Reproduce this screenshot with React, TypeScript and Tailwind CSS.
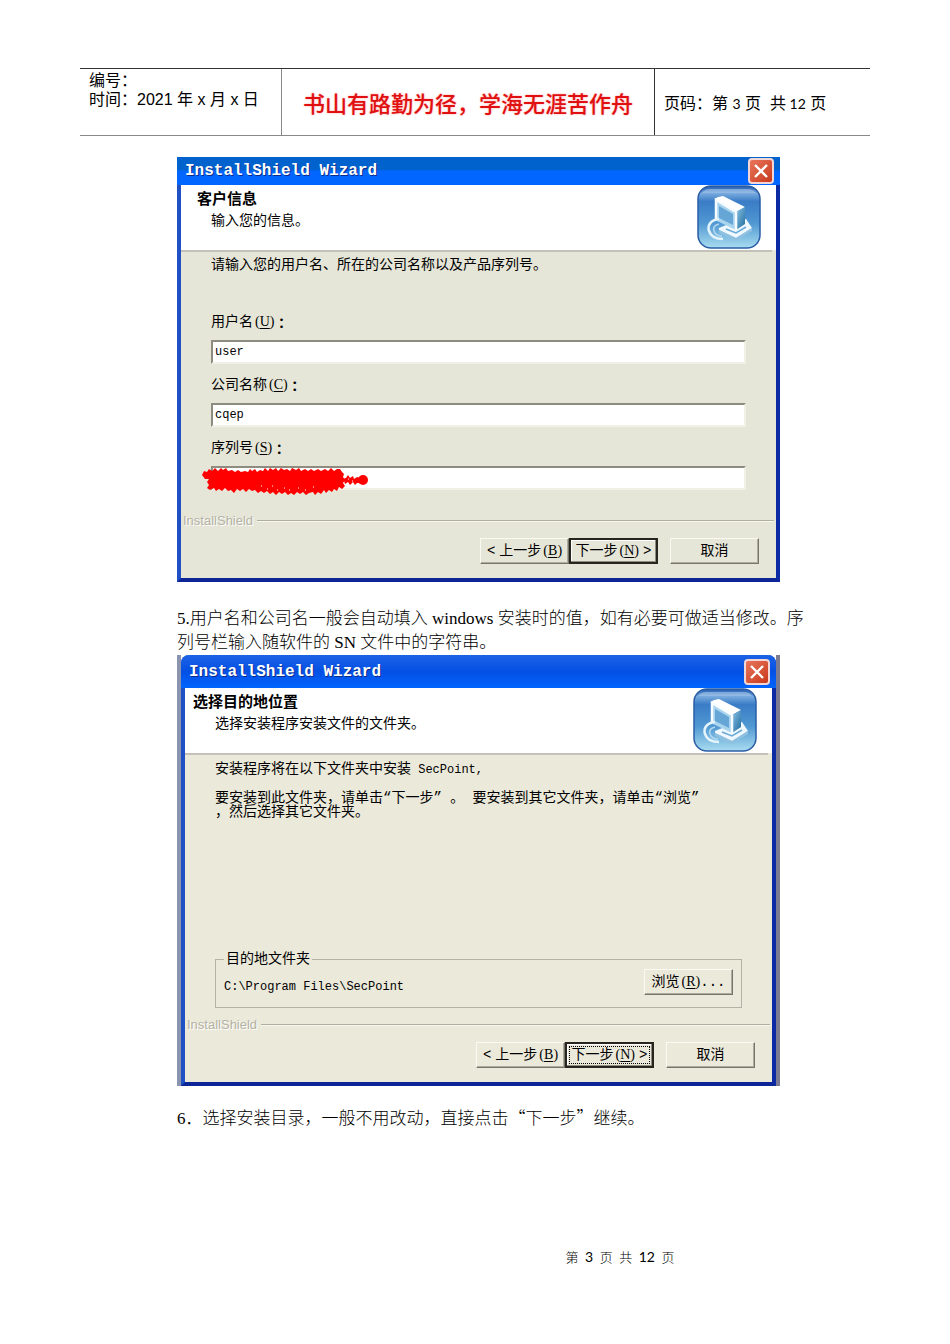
import { useId, type ReactNode } from 'react';
import { clsx } from 'clsx';

interface WizardWindowProps {
  heading: string;
  summary: string;
  variant?: 'flat' | 'glossy';
  children: ReactNode;
}

interface FieldProps {
  label: string;
  hotkey: string;
  value: string;
  redacted?: boolean;
}

interface WizardButtonProps {
  isDefault?: boolean;
  isFocused?: boolean;
  children: ReactNode;
}

// Latin text inside the dialogs is half width next to the Chinese glyphs
function Mono({ children }: { children: ReactNode }) {
  return <span className="text-xs whitespace-pre">{children}</span>;
}

function Hotkey({ letter }: { letter: string }) {
  return (
    <span className="ml-0.5 font-['Liberation_Serif',serif] text-sm">
      (<u className="underline-offset-2">{letter}</u>)
    </span>
  );
}

function InstallIcon() {
  const id = useId();

  return (
    <svg viewBox="0 0 64 64" className="size-16 shrink-0" aria-hidden="true">
      <defs>
        <linearGradient id={`${id}-bg`} x1="0" y1="0" x2="0" y2="1">
          <stop offset="0" stopColor="#1d56ae" />
          <stop offset="0.12" stopColor="#78aade" />
          <stop offset="0.25" stopColor="#3a7cc6" />
          <stop offset="0.6" stopColor="#5098d2" />
          <stop offset="1" stopColor="#a9dcf0" />
        </linearGradient>
        <linearGradient id={`${id}-side`} x1="0" y1="0" x2="1" y2="1">
          <stop offset="0" stopColor="#8cc3e6" />
          <stop offset="1" stopColor="#1f6c9e" />
        </linearGradient>
      </defs>
      <rect x="1" y="1" width="62" height="62" rx="13" fill={`url(#${id}-bg)`} stroke="#2a5da6" strokeWidth="1.5" />
      <path d="M13 4h38q5 0 8 4H5q3-4 8-4z" fill="#b5d4f2" opacity="0.5" />
      {/* Base */}
      <path d="M22 43l17-7 10-2 6 9-16 10-17-8z" fill="#eef8fe" />
      <path d="M22 45l17 8 16-10v3L39 56l-17-8z" fill="#8fc0e0" />
      <path d="M29 44l10 4 10-6" fill="none" stroke="#6aaad4" strokeWidth="1.500" />
      {/* Tower */}
      <path d="M18 15q0-2 3-3l5-1 22 11-9 5z" fill="#ffffff" />
      <path d="M18 15l21 12v18L20 36z" fill="#a9d4ee" />
      <path d="M22 21l14 8v11l-14-7z" fill="#65a6d6" />
      <path d="M39 27l9-5v17l-9 6z" fill={`url(#${id}-side)`} />
      <path d="M19 35V15l20 12v18" fill="none" stroke="#f6fcff" strokeWidth="2.500" />
      {/* Cable */}
      <path d="M22 34c-8 1-12 6-10 12 2 6 8 8 14 8" fill="none" stroke="#e4f4fc" strokeWidth="2.500" />
      <path d="M22 39c-5 1-6 4-5 7 1 3 4 5 8 5" fill="none" stroke="#b2d9f0" strokeWidth="1.500" />
    </svg>
  );
}

function WizardWindow({ heading, summary, variant = 'flat', children }: WizardWindowProps) {
  const glossy = variant === 'glossy';

  return (
    <section
      className={clsx(
        "border-x-4 border-b-4 border-l-[#1f50c4] border-r-[#0c2aa4] border-b-[#0c2698] font-['Liberation_Mono','Noto_Sans_CJK_SC',monospace] text-sm text-black",
        glossy ? 'rounded-t-lg bg-[#ebe9da]' : 'bg-[#e6e6d8]'
      )}
    >
      <header
        className={clsx(
          '-mx-1 flex items-center justify-between pr-[6px] pl-2',
          glossy
            ? 'h-[33px] rounded-t-lg bg-linear-to-b from-[#1c62e6] via-[#0450e4] to-[#0064ff]'
            : 'h-7 bg-linear-to-b from-[#0062cc] from-45% to-[#0066ff] to-50%'
        )}
      >
        <h2 className="text-base font-bold text-white [text-shadow:1px_1px_0_#0a2c8c]">
          InstallShield Wizard
        </h2>
        <button
          type="button"
          aria-label="关闭"
          className="grid size-[26px] place-items-center rounded-sm border-2 border-[#f3d6d6] bg-linear-to-br from-[#e8755a] to-[#c8371a]"
        >
          <svg viewBox="0 0 20 20" className="size-5" aria-hidden="true">
            <path d="M4 4l12 12M16 4L4 16" stroke="#fff" strokeWidth="2.400" />
          </svg>
        </button>
      </header>
      <div className="flex h-[65px] justify-between bg-white pr-[15px]">
        <div className="pt-[5px] leading-[21px]">
          <h3 className={clsx('text-[15px] leading-[21px] font-bold', glossy ? 'pl-2' : 'pl-4')}>{heading}</h3>
          <p className="pl-[30px]">{summary}</p>
        </div>
        <InstallIcon />
      </div>
      <div className="mr-1 border-t-2 border-[#c4c2b8]" />
      {children}
    </section>
  );
}

function Field({ label, hotkey, value, redacted = false }: FieldProps) {
  const id = useId();

  return (
    <div className="relative">
      <label htmlFor={id} className="flex h-5 items-center leading-5">
        {label}
        <Hotkey letter={hotkey} />
        <span className="font-['Noto_Sans_CJK_TC',sans-serif] font-bold">：</span>
      </label>
      <input
        id={id}
        type="text"
        defaultValue={value}
        className="mt-2 block h-6 w-full border-2 border-t-[#8e8c80] border-r-[#f2f1e8] border-b-[#f2f1e8] border-l-[#8e8c80] bg-white pl-0.5 text-xs outline-none"
      />
      {redacted && (
        <svg
          viewBox="0 0 168 30"
          className="absolute -bottom-1.5 -left-2.5 h-[30px] w-[168px]"
          aria-hidden="true"
        >
          <path
            fill="#ff0000"
            d="M1 9L3 5 6 6 8 3 11 5 14 2 17 5 20 2 22 4 25 2 27 5 31 4 34 6 37 4 40 6 44 5 47 6 49 3 51 5 54 3 56 6 59 4 62 5 64 2 67 5 69 2 72 4 75 2 77 5 80 2 83 4 86 3 89 5 91 2 95 4 98 2 100 5 104 3 107 5 110 3 113 5 117 3 120 5 124 3 127 5 130 2 133 5 136 3 139 3 141 6 143 8 142 11 144 14 142 17 144 20 141 23 138 21 136 25 133 23 131 26 128 24 125 27 123 24 120 28 117 26 114 29 112 26 108 27 105 29 102 26 99 28 96 26 93 29 90 27 87 29 84 26 81 28 78 26 75 29 72 26 69 28 66 25 63 27 60 25 57 27 54 24 51 25 48 23 45 26 42 23 39 25 36 23 33 27 30 24 27 25 24 22 21 25 18 23 15 25 13 22 9 24 6 22 8 19 6 16 8 13 4 13z"
          />
          <path
            fill="#ff0000"
            d="M141 13l4-1 2-3 2 3 3-2 1 3 3-2 3 1v5l-3 0-2 2-2-3-3 3-2-3-3 2-1-3-3 1z"
          />
          <circle cx="162" cy="14" r="5" fill="#ff0000" />
          <path
            d="M60 20h1M66 23h1M71 20h1M76 24h1M83 22h1M88 24h1M97 22h1M104 24h1M112 21h1M147 13h1M151 15h1"
            stroke="#fff"
            strokeWidth="1"
          />
        </svg>
      )}
    </div>
  );
}

function WizardButton({ isDefault = false, isFocused = false, children }: WizardButtonProps) {
  return (
    <button
      type="button"
      className={clsx(
        'h-[26px] w-[89px] border p-0.5 whitespace-nowrap',
        isDefault
          ? 'border-2 border-[#26261f] shadow-[inset_-1px_-1px_0_#8e8c80,inset_1px_1px_0_#fff]'
          : 'border-t-[#faf9f2] border-r-[#77756a] border-b-[#77756a] border-l-[#faf9f2] shadow-[inset_-1px_-1px_0_#aeac9e]'
      )}
    >
      <span
        className={clsx(
          'flex h-full items-center justify-center gap-1 leading-none',
          isFocused && 'border border-dotted border-black'
        )}
      >
        {children}
      </span>
    </button>
  );
}

function WizardFooter({ focusNext = false }: { focusNext?: boolean }) {
  return (
    <footer>
      <div className="flex items-center gap-1 px-0.5">
        <span className="font-['Liberation_Sans',sans-serif] text-[13px] leading-[18px] text-[#b4b2a4] [text-shadow:1px_1px_0_#fff]">
          InstallShield
        </span>
        <div className="h-0.5 flex-1 border-t border-b border-t-[#b0ae9e] border-b-[#f8f7ee]" />
      </div>
      <div className="mt-2 flex justify-end pr-[17px] pb-[14px]">
        <WizardButton>
          <span>&lt;</span>
          <span>
            上一步
            <Hotkey letter="B" />
          </span>
        </WizardButton>
        <WizardButton isDefault isFocused={focusNext}>
          <span>
            下一步
            <Hotkey letter="N" />
          </span>
          <span>&gt;</span>
        </WizardButton>
        <div className="ml-3">
          <WizardButton>取消</WizardButton>
        </div>
      </div>
    </footer>
  );
}

function PageHeader() {
  return (
    <header className="mx-20 grid min-h-[68px] grid-cols-[202px_1fr_215px] border-y border-t-[#333] border-b-[#888] font-['Liberation_Sans','Noto_Sans_CJK_SC',sans-serif] text-base text-black">
      <div className="border-r border-[#888] pt-0.5 pl-[9px] leading-[19px]">
        <p>编号：</p>
        <p>时间：2021 年 x 月 x 日</p>
      </div>
      <div className="grid place-items-center border-r border-[#333] pt-1 text-[22px] font-medium whitespace-nowrap text-[#e01010] [text-shadow:0_0_2px_#ff9a9a]">
        书山有路勤为径，学海无涯苦作舟
      </div>
      <div className="flex items-center pt-1 pl-[9px] whitespace-pre">
        <p>
          页码：第 <span className="font-['Lato',sans-serif] text-sm">3</span> 页{'  '}共
          <span className="font-['Lato',sans-serif] text-sm"> 12</span> 页
        </p>
      </div>
    </header>
  );
}

export default function App() {
  return (
    <div className="bg-white pt-[68px] pb-10 font-['Liberation_Serif','Noto_Sans_CJK_SC',serif] text-black">
      <PageHeader />

      <main className="mr-[140px] ml-[177px] pt-[21px] text-[17px] leading-6 font-light">
        <div className="max-w-[603px] font-normal">
          <WizardWindow heading="客户信息" summary="输入您的信息。">
            <div className="px-[30px] pt-[3px] pb-[22px]">
              <p className="leading-5">请输入您的用户名、所在的公司名称以及产品序列号。</p>
              <form className="mt-[37px] flex flex-col gap-[11px]">
                <Field label="用户名" hotkey="U" value="user" />
                <Field label="公司名称" hotkey="C" value="cqep" />
                <Field label="序列号" hotkey="S" value="" redacted />
              </form>
            </div>
            <WizardFooter />
          </WizardWindow>
        </div>

        <p className="mt-[25px]">
          5.用户名和公司名一般会自动填入 windows 安装时的值，如有必要可做适当修改。序列号栏输入随软件的 SN
          文件中的字符串。
        </p>

        {/* Slivers of the desktop stay visible on both sides of this window */}
        <div className="max-w-[603px] border-x-4 border-r-[#7c7a90] border-l-[#8a94ae] font-normal">
          <WizardWindow heading="选择目的地位置" summary="选择安装程序安装文件的文件夹。" variant="glossy">
            <div className="px-[30px] pt-1 pb-2">
              <p className="leading-5">
                安装程序将在以下文件夹中安装<Mono> SecPoint,</Mono>
              </p>
              <p className="mt-3 leading-[14px]">
                要安装到此文件夹，请单击“下一步” 。 要安装到其它文件夹，请单击“浏览”
                <br />
                ，然后选择其它文件夹。
              </p>
              <fieldset className="mt-[130px] border border-[#b4b2a4] px-2 pb-3">
                <legend className="px-0.5 leading-5">目的地文件夹</legend>
                <div className="flex items-end justify-between">
                  <Mono>C:\Program Files\SecPoint</Mono>
                  <WizardButton>
                    <span>
                      浏览
                      <Hotkey letter="R" />
                      ...
                    </span>
                  </WizardButton>
                </div>
              </fieldset>
            </div>
            <WizardFooter focusNext />
          </WizardWindow>
        </div>

        <p className="mt-[19px]">
          6．选择安装目录，一般不用改动，直接点击
          <span className="font-['Noto_Sans_CJK_SC',sans-serif]">“下一步”</span>
          继续。
        </p>
      </main>

      <footer className="mt-[115px] pl-[290px] text-center text-[13px] leading-6 font-light whitespace-pre">
        第{'  '}
        <span className="font-['Lato',sans-serif] text-sm font-normal">3</span>
        {'  '}页{'  '}共{'  '}
        <span className="font-['Lato',sans-serif] text-sm font-normal">12</span>
        {'  '}页
      </footer>
    </div>
  );
}
